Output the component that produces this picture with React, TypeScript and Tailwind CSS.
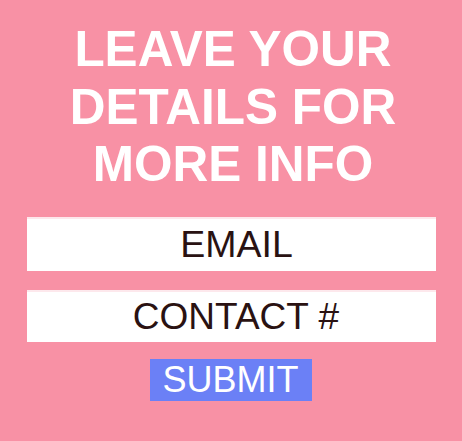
export default function App() {
  return (
    <div
      className="w-[462px] h-[441px] bg-[#f891a5] flex flex-col items-center pt-[20px]"
      style={{ fontFamily: '"Liberation Sans", Arial, sans-serif' }}
    >
      {/* Heading */}
      <h1 className="text-white font-bold text-[49.5px] leading-[57.5px] text-center pl-[4px]">
        LEAVE YOUR
        <br />
        DETAILS FOR
        <br />
        MORE INFO
      </h1>

      {/* Fields */}
      <div className="mt-[24px] w-[409px] flex flex-col gap-[19px]">
        <div className="h-[54px] bg-white border-t-2 border-[#fde8ec] flex items-center justify-center pl-[11px] text-[37.5px] leading-none text-[#2a1212]">
          EMAIL
        </div>
        <div className="h-[52px] bg-white border-t-2 border-[#fde8ec] flex items-center justify-center pl-[10px] text-[37px] leading-none text-[#2a1212]">
          CONTACT #
        </div>
      </div>

      {/* Submit */}
      <button className="mt-[17px] ml-[-1px] w-[162px] h-[42px] bg-[#6b80f6] text-white text-[36px] leading-none flex items-center justify-center">
        SUBMIT
      </button>
    </div>
  );
}
